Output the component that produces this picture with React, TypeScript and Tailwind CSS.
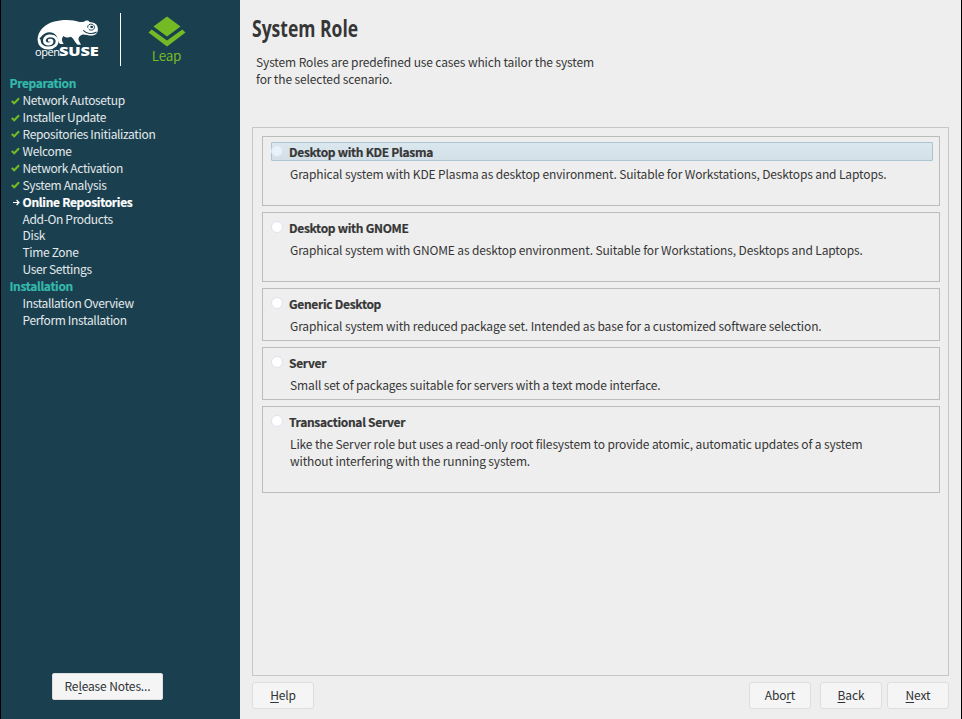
import React from "react";

const done = [
  "Network Autosetup",
  "Installer Update",
  "Repositories Initialization",
  "Welcome",
  "Network Activation",
  "System Analysis",
];

const pending = ["Add-On Products", "Disk", "Time Zone", "User Settings"];
const install = ["Installation Overview", "Perform Installation"];

const roles = [
  { title: "Desktop with KDE Plasma", h: "h-[70px]", selected: true, lines: ["Graphical system with KDE Plasma as desktop environment. Suitable for Workstations, Desktops and Laptops."] },
  { title: "Desktop with GNOME", h: "h-[70px]", lines: ["Graphical system with GNOME as desktop environment. Suitable for Workstations, Desktops and Laptops."] },
  { title: "Generic Desktop", h: "h-[53px]", lines: ["Graphical system with reduced package set. Intended as base for a customized software selection."] },
  { title: "Server", h: "h-[53px]", lines: ["Small set of packages suitable for servers with a text mode interface."] },
  { title: "Transactional Server", h: "h-[87px]", lines: ["Like the Server role but uses a read-only root filesystem to provide atomic, automatic updates of a system", "without interfering with the running system."] },
];

function Gecko() {
  return (
    <svg viewBox="105 54 200 96" className="block h-8 w-[66.67px]" fill="none">
      <path
        fill="#fff"
        d="M113 121C113 86 145 60 200 60C215 60 228 62 239 66C244 66 248 66 252 65C258 60 266 61 268 66C281 67 290 71 292 79C296 92 293 103 281 106C268 109 256 102 246 104C238 107 234 114 236 121L243 134H233C225 128 222 116 213 110C204 114 197 113 190 108C185 115 184 122 191 132H181C173 128 176 117 168 106C158 93 136 92 122 112Z"
      />
      <path stroke="#fff" strokeWidth="8.5" strokeLinecap="round" d="M117.500 120C117 136 131 145 147 144C163 143 173 133 171 121C169 110 156 106 146 108C136 110 131 119 134 126C138 134 153 134 156 126C157 121 152 119 148 121" />
      <path stroke="#1a4050" strokeWidth="3" d="M263 83C262 74 270 71 277 73C286 76 285 88 277 90C273 91 268 90 266 87" />
      <ellipse cx="275" cy="81" rx="4.500" ry="3.500" fill="#1a4050" />
      <path stroke="#1a4050" strokeWidth="3.2" d="M250 91C259 101 277 104 290 96" />
    </svg>
  );
}

function Check() {
  return (
    <svg viewBox="0 0 9 8" className="h-2 w-[9px]" fill="none">
      <path d="M.8 4L3.2 6.3L8.1 1.2" stroke="#73ba25" strokeWidth="2" />
    </svg>
  );
}

function Btn({ children, w }: { children: React.ReactNode; w: string }) {
  return (
    <button className={`flex h-[27px] items-center justify-center rounded-[3px] border border-[#dedede] bg-[#f5f5f5] text-[#2f3335] ${w}`}>
      <span>{children}</span>
    </button>
  );
}

function U({ children }: { children: string }) {
  return <span className="underline decoration-1 underline-offset-[2px] [text-decoration-skip-ink:none]">{children}</span>;
}

export default function App() {
  return (
    <div className="flex h-[719px] w-[962px] overflow-hidden border-x border-black bg-[#eeeeee] font-['Noto_Sans_CJK_SC','Open_Sans',sans-serif] text-[12px] leading-[16.9px] tracking-[-0.13px] whitespace-nowrap text-[#363636]">
      <aside className="flex w-[239px] shrink-0 flex-col bg-[#1a4050] text-[#e4e9eb]">
        <div className="flex h-[75px] pt-[13px]">
          <div className="ml-[34px] w-[85px] pt-[5px]">
            <Gecko />
            <div className="-mt-[4px] flex h-[12px] w-[63px] font-['Open_Sans',sans-serif] text-[11px] leading-[12px] text-white">
              <span className="w-[24px] tracking-[-0.4px]">open</span>
              <span className="w-fit origin-left scale-x-[1.36] text-[12px] font-extrabold">SUSE</span>
            </div>
          </div>
          <div className="h-[53px] w-px bg-white" />
          <div className="ml-[26.5px] flex w-[38px] flex-col items-center pt-[3px]">
            <svg viewBox="0 0 38 32" className="h-8 w-[38px]" fill="#73ba25">
              <path d="M19 .5L32.5 10.5L19 20.5L5.5 10.5ZM3.7 13.5L19 24.5L34.3 13.5L37.5 16.5L19 30.5L.5 16.5Z" />
            </svg>
            <span className="-mt-px text-[13.5px] leading-[17px] tracking-[-0.2px] text-[#73ba25]">Leap</span>
          </div>
        </div>
        <div className="pt-[0.3px] pl-[8.5px] tracking-[-0.34px]">
          <div className="font-bold text-[#35b9ab] [-webkit-text-stroke:0.2px]">Preparation</div>
          {done.map((t) => (
            <div key={t} className="flex items-center">
              <span className="w-[13px] pl-[1.5px]"><Check /></span>
              <span>{t}</span>
            </div>
          ))}
          <div className="flex items-center font-bold text-white">
            <span className="w-[13px] pl-[3.5px]">
              <svg viewBox="0 0 7 7" className="h-[7px] w-[7px]" fill="none" stroke="#fff" strokeWidth="1.2">
                <path d="M0 3.5H6M3.6 1L6 3.5L3.6 6" />
              </svg>
            </span>
            <span className="tracking-[-0.3px] [-webkit-text-stroke:0.2px]">Online Repositories</span>
          </div>
          {pending.map((t) => <div key={t} className="pl-[13px]">{t}</div>)}
          <div className="font-bold text-[#35b9ab] [-webkit-text-stroke:0.2px]">Installation</div>
          {install.map((t) => <div key={t} className="pl-[13px]">{t}</div>)}
        </div>
        <button className="mt-auto mb-[19px] ml-[51px] flex h-[27px] w-[111px] items-center justify-center rounded-[2px] border border-[#dedede] bg-[#f5f5f5] text-[#2f3335]">
          <span>Re<U>l</U>ease Notes...</span>
        </button>
      </aside>
      <main className="flex w-[721px] flex-col pr-[12px] pl-[12px]">
        <h1 className="mt-[12px] h-[32px] w-fit origin-left scale-x-[0.745] font-['Open_Sans',sans-serif] text-[23.5px] leading-[32px] font-bold tracking-normal">System Role</h1>
        <p className="mt-[10px] h-[73px] pl-[4px]">
          System Roles are predefined use cases which tailor the system<br />for the selected scenario.
        </p>
        <section className="flex h-[549px] w-[697px] flex-col gap-[6px] border border-[#c6c8c8] pt-[8px] pl-[9px]">
          {roles.map((r) => (
            <div key={r.title} className={`w-[678px] shrink-0 border border-[#bbbdbd] px-[6px] pt-[5px] pl-[8px] ${r.h}`}>
              <div className={`flex h-[19px] items-center gap-[5px] rounded-[1px] border ${r.selected ? "border-[#aac4d2] bg-linear-to-b from-[#dbe7ee] to-[#d4e0e7]" : "border-transparent"}`}>
                <span className={`mb-px -ml-px mr-px size-[12px] rounded-full border border-[#e0e2ef] ${r.selected ? "bg-[#e8f2f9]" : "bg-white"}`} />
                <span className="pt-px font-bold tracking-[-0.3px] [-webkit-text-stroke:0.2px]">{r.title}</span>
              </div>
              <p className="mt-[5px] pl-[19px]">
                {r.lines.map((l) => <span key={l} className="block">{l}</span>)}
              </p>
            </div>
          ))}
        </section>
        <footer className="mt-[6px] flex">
          <Btn w="w-[62px]"><U>H</U>elp</Btn>
          <div className="ml-auto flex">
            <Btn w="w-[62px]">Abo<U>r</U>t</Btn>
            <Btn w="ml-[9px] w-[62px]"><U>B</U>ack</Btn>
            <Btn w="ml-[5px] w-[62px]"><U>N</U>ext</Btn>
          </div>
        </footer>
      </main>
    </div>
  );
}
